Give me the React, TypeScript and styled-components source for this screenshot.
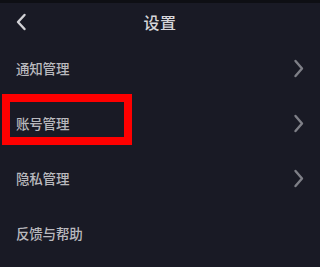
import React from "react";
import styled, { createGlobalStyle } from "styled-components";

const GlobalStyle = createGlobalStyle`
  html, body {
    margin: 0;
    padding: 0;
    background: #191a25;
  }
  body {
    font-family: "Noto Sans CJK SC", "Noto Sans", sans-serif;
  }
`;

const Screen = styled.div`
  width: 320px;
  height: 267px;
  background: #191a25;
  overflow: hidden;
  display: flex;
  flex-direction: column;
`;

const StatusStrip = styled.div`
  height: 3px;
  background: #0e0f14;
`;

const Header = styled.header`
  height: 38px;
  display: grid;
  grid-template-columns: 40px 1fr 40px;
  align-items: center;
`;

const BackButton = styled.div`
  display: flex;
  align-items: center;
  padding-left: 15px;
`;

const Title = styled.h1`
  margin: 0;
  text-align: center;
  font-size: 16px;
  font-weight: 500;
  color: #d6d6da;
  letter-spacing: 0.5px;
`;

const List = styled.ul`
  list-style: none;
  margin: 0;
  padding: 0;
`;

const Row = styled.li`
  position: relative;
  height: 55px;
  display: flex;
  align-items: center;
  justify-content: space-between;
  padding: 0 15px 0 16px;
`;

const Label = styled.span`
  font-size: 13.5px;
  font-weight: 500;
  color: #b9b9be;
  letter-spacing: -0.2px;
  margin-top: -2px;
`;

const Highlight = styled.div`
  position: absolute;
  left: 2px;
  top: -2px;
  width: 130px;
  height: 51px;
  box-sizing: border-box;
  border: 8px solid #fe0000;
  pointer-events: none;
`;

const Chevron = () => (
  <svg width="12" height="19" viewBox="0 0 12 19">
    <polyline
      points="2.5,2 9,9.5 2.5,17"
      fill="none"
      stroke="#7e7f87"
      strokeWidth="2.4"
      strokeLinecap="round"
      strokeLinejoin="round"
    />
  </svg>
);

const BackIcon = () => (
  <svg width="12" height="18" viewBox="0 0 12 18">
    <polyline
      points="9.5,2 3,9 9.5,16"
      fill="none"
      stroke="#d2d2d6"
      strokeWidth="2.4"
      strokeLinecap="round"
      strokeLinejoin="round"
    />
  </svg>
);

const items = [
  { label: "通知管理", arrow: true },
  { label: "账号管理", arrow: true, marked: true },
  { label: "隐私管理", arrow: true },
  { label: "反馈与帮助", arrow: false },
];

export default function App() {
  return (
    <>
      <GlobalStyle />
      <Screen>
        <StatusStrip />
        <Header>
          <BackButton>
            <BackIcon />
          </BackButton>
          <Title>设置</Title>
          <span />
        </Header>
        <List>
          {items.map((item) => (
            <Row key={item.label}>
              <Label>{item.label}</Label>
              {item.arrow && <Chevron />}
              {item.marked && <Highlight />}
            </Row>
          ))}
        </List>
      </Screen>
    </>
  );
}
